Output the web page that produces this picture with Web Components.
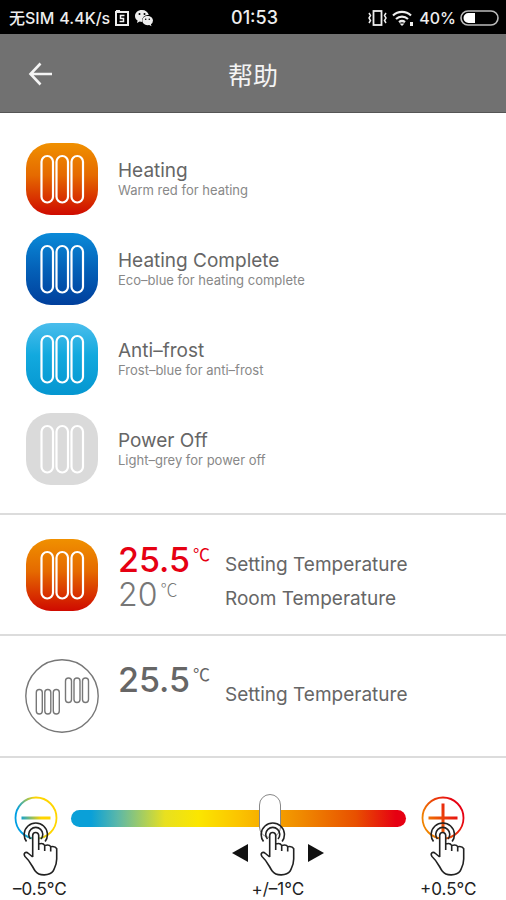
<!DOCTYPE html>
<html lang="zh">
<head>
<meta charset="utf-8">
<meta name="viewport" content="width=device-width, initial-scale=1">
<title>帮助</title>
<style>
    body {
        margin: 0;
        background: #fff;
        color: #666;
        font-family: Inter, "Noto Sans CJK SC", sans-serif;
    }
</style>
</head>
<body>
<help-page></help-page>

<script>
class StatusBar extends HTMLElement {
    constructor() {
        super();
        this.attachShadow({mode: "open"});
    }
    connectedCallback() {
        this.shadowRoot.innerHTML = `
        <style>
            :host {
                display: grid;
                grid-template-columns: 1fr auto 1fr;
                align-items: center;
                height: 34px;
                padding: 2px 6px 0 9px;
                box-sizing: border-box;
                background: #000;
                color: #eee;
                font-size: 16px;
                font-weight: 500;
                line-height: 20px;
                white-space: nowrap;
            }
            div {
                display: flex;
                align-items: center;
                gap: 5px;
            }
            .right {
                justify-content: flex-end;
                gap: 4px;
            }
            .time {
                font-size: 18px;
            }
            svg {
                display: block;
                flex: none;
            }
        </style>
        <div>
            <span>无SIM</span>
            <span>4.4K/s</span>
            <svg width="14" height="16" viewBox="0 0 14 16" fill="none" stroke="#eee" stroke-width="2">
                <rect x="1" y="2" width="12" height="13"/>
                <path d="M1 1h4" />
                <path d="M9.500 5.500h-4v3h3v3h-4" stroke-width="1.500"/>
            </svg>
            <svg width="20" height="18" viewBox="0 0 20 18">
                <path fill="#eee" d="M8 1C3.800 1 1 3.700 1 7c0 2 1 3.500 2.600 4.600L3 14l2.700-1.500 2.200.4A6 6 0 0 1 14.800 6C14 3 11.500 1 8 1z"/>
                <path fill="#eee" d="M13.500 7C10.500 7 8.300 9 8.300 11.600s2.200 4.600 5.200 4.600l1.700-.2 2.300 1.300-.6-2A4.400 4.400 0 0 0 19 11.600C19 9 16.600 7 13.500 7z"/>
                <g fill="#000"><circle cx="5.500" cy="5" r="1"/><circle cx="10.500" cy="5" r="1"/><circle cx="11.700" cy="10.300" r=".8"/><circle cx="15.300" cy="10.300" r=".8"/></g>
            </svg>
        </div>
        <span class="time">01:53</span>
        <div class="right">
            <svg width="19" height="18" viewBox="0 0 19 18" fill="none" stroke="#eee" stroke-width="1.800">
                <rect x="5.500" y="2" width="8" height="14"/>
                <path d="M1 4l1.500 2.500L1 9l1.500 2.500L1 14M18 4l-1.500 2.500L18 9l-1.500 2.500L18 14" stroke-width="1.500"/>
            </svg>
            <svg width="24" height="18" viewBox="0 0 24 18" fill="none" stroke="#eee" stroke-width="2.200">
                <path d="M2 6.500a13 13 0 0 1 18 0M5 10a9 9 0 0 1 12 0M8 13.200a4.800 4.800 0 0 1 6 0"/>
                <path d="M8.500 14.500h5L11 17z" fill="#eee" stroke="none"/>
                <rect x="19" y="13" width="3" height="4" fill="#eee" stroke="none"/>
            </svg>
            <span>40%</span>
            <svg width="40" height="18" viewBox="0 0 40 18">
                <rect x="1" y="2" width="37" height="14" rx="7" fill="none" stroke="#bbb" stroke-width="1.600"/>
                <path d="M15 4H8.500a5 5 0 0 0 0 10H15z" fill="#fff"/>
            </svg>
        </div>
        `;
    }
}

class TitleBar extends HTMLElement {
    constructor() {
        super();
        this.attachShadow({mode: "open"});
    }
    connectedCallback() {
        this.shadowRoot.innerHTML = `
        <style>
            :host {
                display: grid;
                grid-template-columns: 80px 1fr 80px;
                align-items: center;
                height: 79px;
                padding-top: 2px;
                background: #717171;
                border-bottom: 1px solid #555;
                box-sizing: border-box;
                color: #f4f4f4;
            }
            button {
                justify-self: center;
                padding: 8px;
                border: 0;
                background: none;
                color: inherit;
            }
            svg {
                display: block;
            }
            h1 {
                margin: 0;
                padding-top: 4px;
                text-align: center;
                font-size: 25px;
                font-weight: 400;
                line-height: 32px;
            }
        </style>
        <button type="button" aria-label="返回">
            <svg width="24" height="24" viewBox="0 0 24 24" fill="none" stroke="currentColor" stroke-width="2.600">
                <path d="M12.500 1.500L2.500 12l10 10.500M2.500 12H24"/>
            </svg>
        </button>
        <h1><slot></slot></h1>
        `;
    }
}

// Rounded tile with three radiator bars, coloured by mode
class HeaterBadge extends HTMLElement {
    constructor() {
        super();
        this.attachShadow({mode: "open"});
    }
    connectedCallback() {
        this.shadowRoot.innerHTML = `
        <style>
            :host {
                display: block;
                flex: none;
                width: 72px;
                height: 72px;
                border-radius: 25px;
                background: linear-gradient(#f09000, #e56a00 45%, #cf0a00);
            }
            :host([mode="complete"]) {
                background: linear-gradient(#0a8ad8, #0461b8 50%, #003f9c);
            }
            :host([mode="frost"]) {
                background: linear-gradient(#4abdec, #12a9de 45%, #0596d0);
            }
            :host([mode="off"]) {
                background: #dadada;
            }
            svg {
                display: block;
            }
        </style>
        <svg width="72" height="72" viewBox="0 0 72 72" fill="none" stroke="#fff" stroke-width="2.200">
            <rect x="15.500" y="13" width="11.500" height="46.500" rx="5.700"/>
            <rect x="30.500" y="13" width="11.500" height="46.500" rx="5.700"/>
            <rect x="45.500" y="13" width="11.500" height="46.500" rx="5.700"/>
        </svg>
        `;
    }
}

class GroupBadge extends HTMLElement {
    constructor() {
        super();
        this.attachShadow({mode: "open"});
    }
    connectedCallback() {
        this.shadowRoot.innerHTML = `
        <style>
            :host {
                display: block;
                flex: none;
                margin: 0 -1px;
            }
            svg {
                display: block;
            }
        </style>
        <svg width="74" height="74" viewBox="0 0 74 74" fill="none" stroke="#777" stroke-width="1.400">
            <circle cx="37" cy="37" r="36.200"/>
            <rect x="11.300" y="30.500" width="6" height="24.500" rx="3"/>
            <rect x="19.800" y="30.500" width="6" height="24.500" rx="3"/>
            <rect x="28.300" y="30.500" width="6" height="24.500" rx="3"/>
            <rect x="40.500" y="19" width="6" height="24.500" rx="3"/>
            <rect x="49" y="19" width="6" height="24.500" rx="3"/>
            <rect x="57.500" y="19" width="6" height="24.500" rx="3"/>
        </svg>
        `;
    }
}

class HelpItem extends HTMLElement {
    constructor() {
        super();
        this.attachShadow({mode: "open"});
    }
    connectedCallback() {
        this.shadowRoot.innerHTML = `
        <style>
            :host {
                display: flex;
                align-items: center;
                gap: 20px;
            }
            h2, p {
                margin: 0;
            }
            h2 {
                font-size: 19px;
                font-weight: 400;
                line-height: 21px;
            }
            p {
                color: #888;
                font-size: 13px;
                font-weight: 400;
                line-height: 18px;
            }
        </style>
        <heater-badge mode="${this.getAttribute("mode")}"></heater-badge>
        <div>
            <h2><slot name="title"></slot></h2>
            <p><slot></slot></p>
        </div>
        `;
    }
}

class TempReading extends HTMLElement {
    constructor() {
        super();
        this.attachShadow({mode: "open"});
    }
    connectedCallback() {
        this.shadowRoot.innerHTML = `
        <style>
            :host {
                display: flex;
                gap: 3px;
                font-size: 34px;
                font-weight: 500;
                line-height: 35px;
            }
            :host([kind="setting"]) {
                color: #e60012;
            }
            :host([kind="room"]) {
                color: #777;
                font-size: 32px;
                font-weight: 300;
            }
            .unit {
                font-family: "Noto Sans CJK SC", sans-serif;
                font-size: 17px;
                font-weight: 400;
                line-height: 24px;
            }
            :host([kind="room"]) .unit {
                font-weight: 300;
            }
        </style>
        <slot></slot><span class="unit">℃</span>
        `;
    }
}

// Hand with two touch rings round the fingertip
class TapHand extends HTMLElement {
    constructor() {
        super();
        this.attachShadow({mode: "open"});
    }
    connectedCallback() {
        this.shadowRoot.innerHTML = `
        <style>
            :host {
                display: block;
                flex: none;
            }
            svg {
                display: block;
            }
        </style>
        <svg width="36" height="54" viewBox="0 0 36 54" fill="none" stroke="#222" stroke-width="1.600" stroke-linejoin="round">
            <path d="M9.700 34V13.500a3 3 0 0 1 6 0V22q4.500-1.500 6 1.500 4.500-1.500 6 1.200 4.500-1 6 2V37c0 5-2.700 7-3.200 12-3 4.500-14 5.500-18 0C9 44.500 8 40 2.500 34.500 0 31 3 28.500 5.500 31z" fill="#fff" stroke="none"/>
            <path d="M9.700 35V13.500a3 3 0 0 1 6 0V28M15.700 22q4.500-1.500 6 1.500V29M21.700 23.500q4.500-1.500 6 1.200V29.500M27.700 24.700q4.500-1 6 2V37c0 6-2 8.500-3.500 12-3.500 4.800-14 5.500-18 0C9 44.500 8 40 2 34.500 0 31.500 2.500 29 5.500 31.500L9.700 35"/>
            <path d="M3.500 19.500a11.600 11.600 0 1 1 18.600 0M7.500 17a7 7 0 1 1 10.500 0"/>
        </svg>
        `;
    }
}

class StepButton extends HTMLElement {
    constructor() {
        super();
        this.attachShadow({mode: "open"});
    }
    connectedCallback() {
        const plus = this.getAttribute("kind") === "plus";
        const colors = plus ? ["#f08300", "#e60012"] : ["#009fe3", "#ffd500"];
        this.shadowRoot.innerHTML = `
        <style>
            :host {
                display: block;
                flex: none;
            }
            button {
                position: relative;
                display: block;
                padding: 3px 0 0;
                border: 0;
                background: none;
                color: #222;
                font: inherit;
                text-align: left;
                white-space: nowrap;
            }
            svg {
                display: block;
                margin-left: 1px;
            }
            tap-hand {
                position: absolute;
                left: 10px;
                top: 29px;
            }
            span {
                display: block;
                margin-top: 39px;
                font-size: 17px;
                line-height: 20px;
            }
        </style>
        <button type="button">
            <svg width="44" height="44" viewBox="0 0 44 44" fill="none" stroke="url(#ring)">
                <defs>
                    <linearGradient id="ring" gradientUnits="userSpaceOnUse" x1="6" y1="${plus ? 30 : 24}" x2="${plus ? 38 : 26}" y2="${plus ? 14 : 18}">
                        <stop offset="0" stop-color="${colors[0]}"/>
                        <stop offset="1" stop-color="${colors[1]}"/>
                    </linearGradient>
                </defs>
                <circle cx="22" cy="22" r="20.500" stroke-width="1.800"/>
                <path d="${plus ? "M7.500 22h29M22 7.500v29" : "M7.500 22h29"}" stroke-width="3"/>
            </svg>
            <tap-hand></tap-hand>
            <span><slot></slot></span>
        </button>
        `;
    }
}

class TempSlider extends HTMLElement {
    constructor() {
        super();
        this.attachShadow({mode: "open"});
    }
    connectedCallback() {
        this.shadowRoot.innerHTML = `
        <style>
            :host {
                display: block;
                flex: 1;
                min-width: 0;
            }
            input {
                -webkit-appearance: none;
                appearance: none;
                display: block;
                width: 100%;
                height: 50px;
                margin: 0;
                background: none;
            }
            input::-webkit-slider-runnable-track {
                height: 17px;
                border-radius: 9px;
                background: linear-gradient(90deg, #0aa0d8 6%, #5cb8a8 14%, #e8e020 28%, #fbe600 38%, #fbc400 50%, #f08c00 68%, #e85000 85%, #e60012 97%);
            }
            input::-webkit-slider-thumb {
                -webkit-appearance: none;
                width: 22px;
                height: 44px;
                margin-top: -16px;
                border: 1px solid #888;
                border-radius: 11px;
                background: #fff;
            }
            .hint {
                position: relative;
                width: 92px;
                margin-left: 48%;
                margin-top: -21px;
            }
            .drag {
                display: flex;
                align-items: center;
                justify-content: space-between;
            }
            .drag svg {
                display: block;
                margin-top: 8px;
            }
            label {
                display: block;
                margin-top: 3px;
                color: #222;
                text-align: center;
                font-size: 17px;
                line-height: 20px;
            }
        </style>
        <input id="temp" type="range" min="0" max="100" value="60">
        <div class="hint">
            <div class="drag">
                <svg width="16" height="18" viewBox="0 0 16 18"><path d="M0 9L16 0v18z" fill="#111"/></svg>
                <tap-hand></tap-hand>
                <svg width="16" height="18" viewBox="0 0 16 18"><path d="M16 9L0 0v18z" fill="#111"/></svg>
            </div>
            <label for="temp"><slot></slot></label>
        </div>
        `;
    }
}

class HelpPage extends HTMLElement {
    constructor() {
        super();
        this.attachShadow({mode: "open"});
    }
    connectedCallback() {
        this.shadowRoot.innerHTML = `
        <style>
            :host {
                display: block;
            }
            section {
                display: flex;
                border-bottom: 2px solid #dcdcdc;
            }
            .modes {
                flex-direction: column;
                gap: 18px;
                padding: 30px 26px 28px;
            }
            .reading {
                gap: 20px;
                padding: 24px 26px 18px;
            }
            .single {
                padding: 23px 26px 23px;
            }
            .values {
                flex: none;
                width: 87px;
                padding-top: 3px;
            }
            .names {
                padding-top: 9px;
                font-size: 19px;
                line-height: 34px;
            }
            .single .names {
                padding-top: 19px;
            }
            p {
                margin: 0;
            }
            .adjust {
                gap: 14px;
                padding: 35px 28px 0 13px;
                border: 0;
            }
            .adjust step-button {
                width: 58px;
            }
            .adjust step-button:first-child {
                margin-right: -14px;
            }
        </style>
        <status-bar></status-bar>
        <title-bar>帮助</title-bar>
        <main>
            <section class="modes">
                <help-item mode="heating"><span slot="title">Heating</span>Warm red for heating</help-item>
                <help-item mode="complete"><span slot="title">Heating Complete</span>Eco–blue for heating complete</help-item>
                <help-item mode="frost"><span slot="title">Anti–frost</span>Frost–blue for anti–frost</help-item>
                <help-item mode="off"><span slot="title">Power Off</span>Light–grey for power off</help-item>
            </section>
            <section class="reading">
                <heater-badge mode="heating"></heater-badge>
                <div class="values">
                    <temp-reading kind="setting">25.5</temp-reading>
                    <temp-reading kind="room">20</temp-reading>
                </div>
                <div class="names">
                    <p>Setting Temperature</p>
                    <p>Room Temperature</p>
                </div>
            </section>
            <section class="reading single">
                <group-badge></group-badge>
                <div class="values">
                    <temp-reading>25.5</temp-reading>
                </div>
                <div class="names">
                    <p>Setting Temperature</p>
                </div>
            </section>
            <section class="adjust">
                <step-button kind="minus">–0.5℃</step-button>
                <temp-slider>+/–1℃</temp-slider>
                <step-button kind="plus">+0.5℃</step-button>
            </section>
        </main>
        `;
    }
}

customElements.define("status-bar", StatusBar);
customElements.define("title-bar", TitleBar);
customElements.define("heater-badge", HeaterBadge);
customElements.define("group-badge", GroupBadge);
customElements.define("help-item", HelpItem);
customElements.define("temp-reading", TempReading);
customElements.define("tap-hand", TapHand);
customElements.define("step-button", StepButton);
customElements.define("temp-slider", TempSlider);
customElements.define("help-page", HelpPage);
</script>
</body>
</html>
